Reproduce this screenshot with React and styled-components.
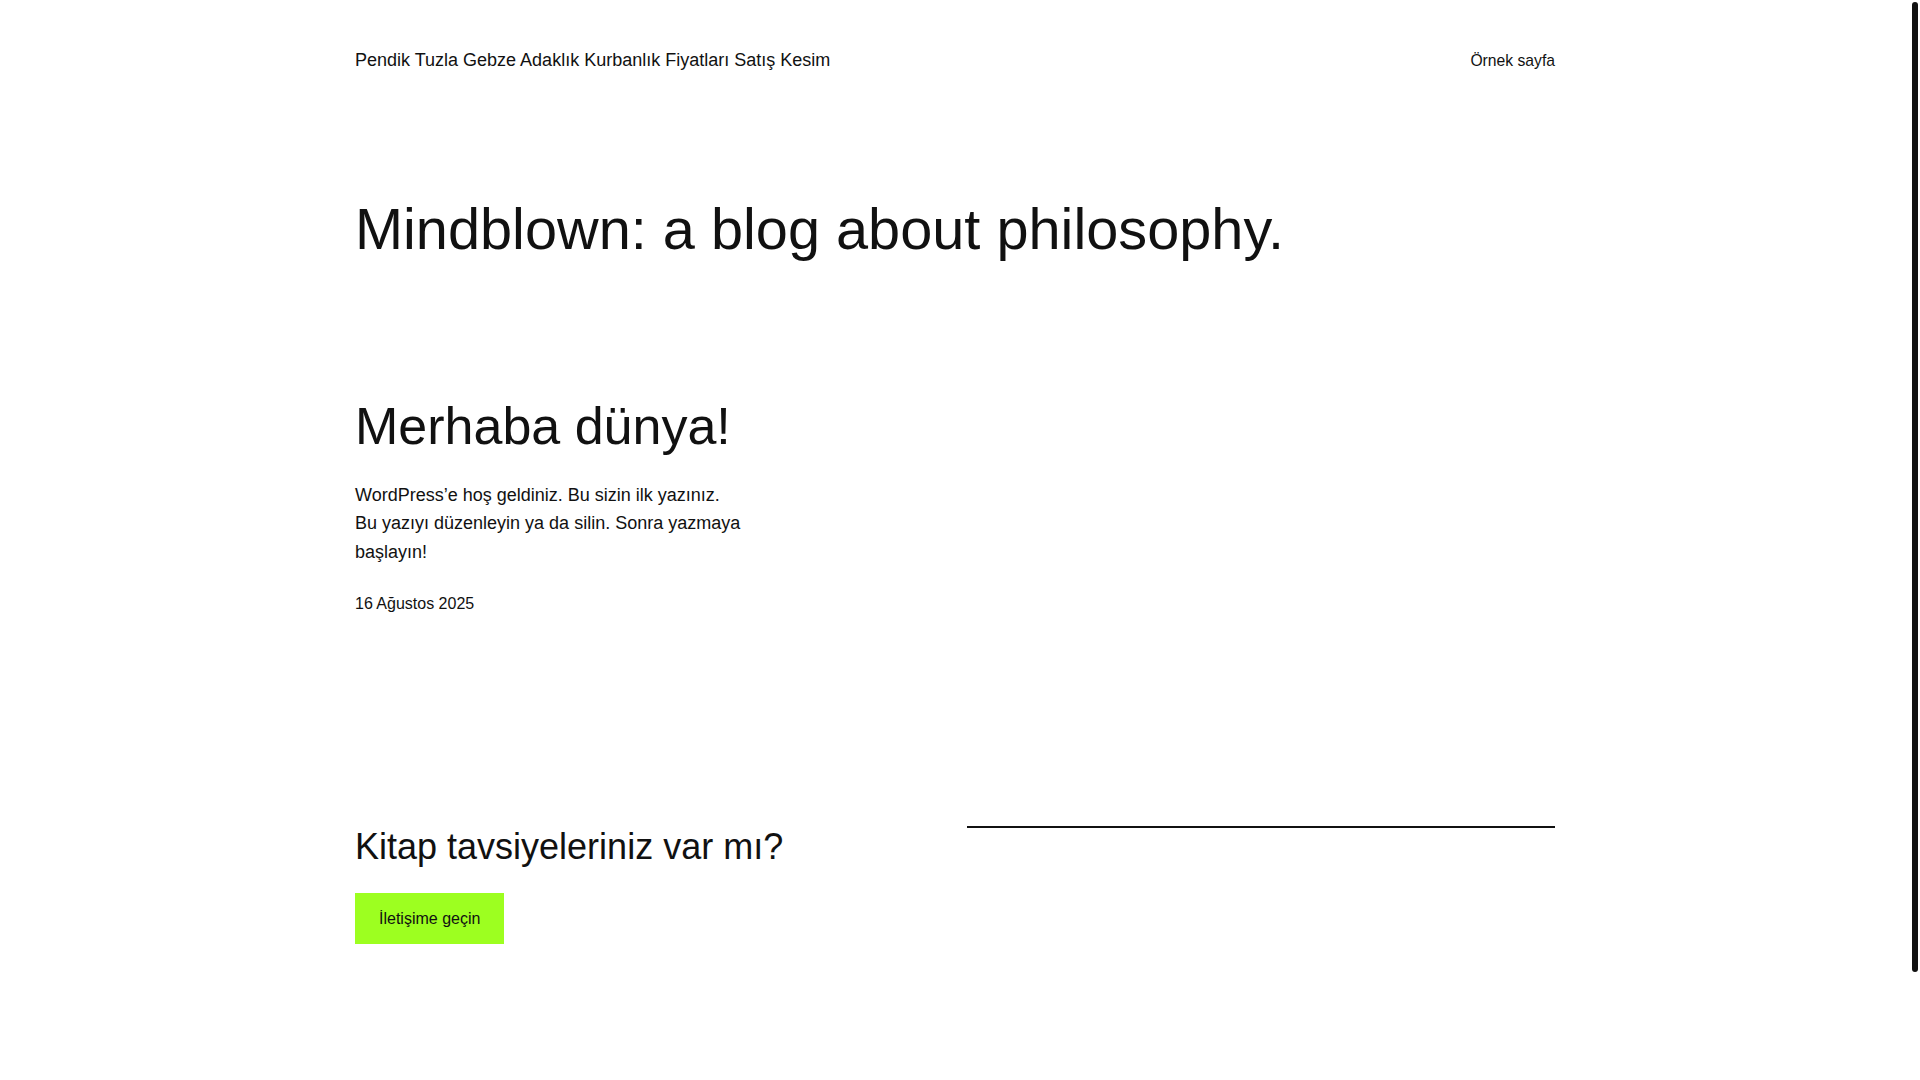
import React from 'react';
import styled, { createGlobalStyle } from 'styled-components';

const GlobalStyle = createGlobalStyle`
  html {
    background: #fff;
    scrollbar-width: none;
  }
  html::-webkit-scrollbar {
    display: none;
  }
  body {
    margin: 0;
    padding-right: 10px;
    background: #fff;
    color: #111;
    font-family: "Liberation Sans", Arial, sans-serif;
  }
  * {
    box-sizing: border-box;
  }
`;

// the scrollbar thumb the browser shows in the reference
const ScrollThumb = styled.div`
  position: fixed;
  top: 2px;
  right: 2px;
  width: 6px;
  height: 970px;
  border-radius: 3px;
  background: #111;
`;

const Page = styled.div`
  width: 1200px;
  margin: 0 auto;
  padding-bottom: 254px;
`;

const Header = styled.header`
  height: 120px;
  padding-top: 2px;
  display: flex;
  align-items: center;
  justify-content: space-between;
`;

const SiteTitle = styled.a`
  font-size: 18px;
  line-height: 1.4;
  color: #111;
  text-decoration: none;
`;

const Nav = styled.nav`
  display: flex;
  gap: 24px;
`;

const NavLink = styled.a`
  font-size: 15.7px;
  line-height: 1.4;
  color: #111;
  text-decoration: none;
`;

const PageTitle = styled.h1`
  margin: 74px 0 0;
  font-size: 57.7px;
  line-height: 70px;
  font-weight: 400;
`;

const PostGrid = styled.div`
  margin-top: 131px;
  display: grid;
  grid-template-columns: repeat(3, 1fr);
  gap: 20px;
`;

const Post = styled.article`
  display: flex;
  flex-direction: column;
`;

const PostTitle = styled.h2`
  margin: 0;
  font-size: 52px;
  line-height: 62px;
  font-weight: 400;
`;

const Excerpt = styled.p`
  margin: 23.6px 0 0;
  font-size: 18px;
  line-height: 1.6;
`;

const PostDate = styled.time`
  margin-top: 26px;
  font-size: 16px;
  line-height: 22px;
`;

const Cta = styled.section`
  margin-top: 211px;
  display: grid;
  grid-template-columns: 1fr 1fr;
  gap: 24px;
  align-items: start;
`;

const CtaText = styled.div`
  display: flex;
  flex-direction: column;
  align-items: flex-start;
`;

const CtaTitle = styled.h2`
  margin: 0;
  font-size: 36px;
  line-height: 42px;
  font-weight: 400;
`;

const Button = styled.a`
  margin-top: 25px;
  padding: 14px 24px;
  font-size: 16px;
  line-height: 23px;
  color: #111;
  background: #9dff20;
  text-decoration: none;
`;

const Separator = styled.hr`
  margin: 0;
  border: none;
  border-top: 2px solid #111;
`;

const App = () => {
  return (
    <>
      <GlobalStyle />
      <ScrollThumb />
      <Page>
        <Header>
          <SiteTitle href="#">Pendik Tuzla Gebze Adaklık Kurbanlık Fiyatları Satış Kesim</SiteTitle>
          <Nav>
            <NavLink href="#">Örnek sayfa</NavLink>
          </Nav>
        </Header>
        <main>
          <PageTitle>Mindblown: a blog about philosophy.</PageTitle>
          <PostGrid>
            <Post>
              <PostTitle>Merhaba dünya!</PostTitle>
              <Excerpt>
                WordPress’e hoş geldiniz. Bu sizin ilk yazınız. Bu yazıyı düzenleyin ya da silin. Sonra yazmaya başlayın!
              </Excerpt>
              <PostDate>16 Ağustos 2025</PostDate>
            </Post>
          </PostGrid>
          <Cta>
            <CtaText>
              <CtaTitle>Kitap tavsiyeleriniz var mı?</CtaTitle>
              <Button href="#">İletişime geçin</Button>
            </CtaText>
            <Separator />
          </Cta>
        </main>
      </Page>
    </>
  );
};

export default App;
